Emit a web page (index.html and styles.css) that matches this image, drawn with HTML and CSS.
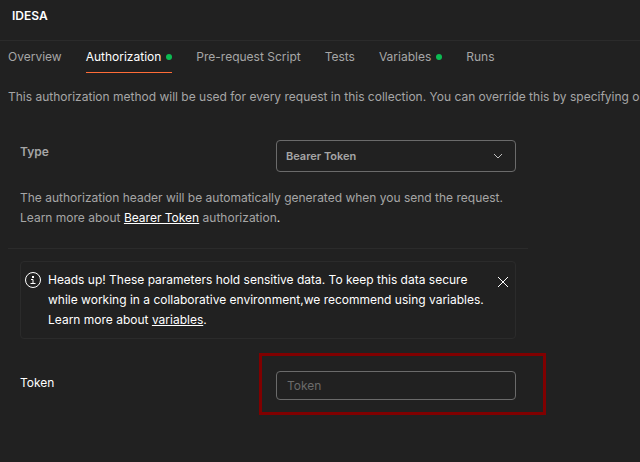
FILE: index.html
```html
<!DOCTYPE html>
<html lang="en">
<head>
<meta charset="utf-8">
<title>IDESA</title>
<link rel="stylesheet" href="styles.css">
</head>
<body>
<header class="header"><h1 class="title">IDESA</h1></header>
<nav class="tabs">
  <a class="tab" href="#overview">Overview</a>
  <a class="tab tab-active" href="#authorization">Authorization<span class="dot"></span></a>
  <a class="tab" href="#prerequest">Pre-request Script</a>
  <a class="tab" href="#tests">Tests</a>
  <a class="tab" href="#variables">Variables<span class="dot"></span></a>
  <a class="tab" href="#runs">Runs</a>
</nav>
<main class="content">
  <p class="intro">This authorization method will be used for every request in this collection. You can override this by specifying one</p>
  <section class="auth">
    <div class="row">
      <label class="label label-type" for="type">Type</label>
      <div class="select-wrap">
        <select class="control select" id="type"><option>Bearer Token</option></select>
        <svg class="chevron" viewBox="0 0 16 16" aria-hidden="true"><path d="M4 6l4 4 4-4"/></svg>
      </div>
    </div>
    <p class="help">The authorization header will be automatically generated when you send the request. Learn more about <a class="link" href="#bearer">Bearer Token</a> authorization<span class="stop">.</span></p>
  </section>
  <section class="params">
    <div class="alert" role="note">
      <svg class="info" viewBox="0 0 18 18" aria-hidden="true"><circle cx="9" cy="9" r="7.500"/><path d="M7 8.500h2v4M6.500 12.500h5"/><path class="solid" d="M8 5h2v2H8z"/></svg>
      <p class="alert-text">Heads up! These parameters hold sensitive data. To keep this data secure while working in a collaborative environment,we recommend using variables. Learn more about <a class="link" href="#vars">variables</a>.</p>
      <button class="close" type="button" aria-label="Close"><svg viewBox="0 0 16 16"><path d="m3 3 10 10M13 3 3 13"/></svg></button>
    </div>
    <div class="row">
      <label class="label" for="token">Token</label>
      <div class="highlight"><input class="control input" id="token" type="text" placeholder="Token"></div>
    </div>
  </section>
</main>
</body>
</html>
```
FILE: styles.css
```css
* {
  box-sizing: border-box;
}

body {
  margin: 0;
  min-height: 100vh;
  background: #212121;
  color: #a6a6a6;
  font: 12px/20px Inter, sans-serif;
}

h1,
p {
  margin: 0;
}

svg {
  fill: none;
  stroke: currentColor;
}

.header {
  padding: 6px 12px 14px;
  border-bottom: 1px solid #2b2b2b;
}

.title {
  color: #fff;
  font-size: 12px;
  font-weight: 600;
  line-height: 20px;
}

.tabs {
  display: flex;
  gap: 24px;
  padding: 0 8px;
}

.tab {
  display: flex;
  align-items: center;
  gap: 5px;
  height: 32px;
  border-bottom: 1px solid transparent;
  color: #a6a6a6;
  text-decoration: none;
  white-space: nowrap;
}

.tab-active {
  border-color: #ff6c37;
  color: #fff;
}

.dot {
  width: 6px;
  height: 6px;
  border-radius: 50%;
  background: #0cbb52;
}

.content {
  padding: 14px 0 14px 8px;
}

.intro {
  overflow: hidden;
  white-space: nowrap;
}

.auth {
  max-width: 520px;
  padding: 33px 12px 20px;
  border-bottom: 1px solid #2b2b2b;
}

.row {
  display: flex;
  align-items: flex-start;
  justify-content: space-between;
}

.label {
  color: #fff;
  padding-top: 2px;
}

.label-type {
  color: #a6a6a6;
  font-weight: 600;
}

.select-wrap {
  position: relative;
  width: 240px;
}

.control {
  display: block;
  width: 100%;
  margin: 0;
  border: 1px solid #6b6b6b;
  border-radius: 4px;
  background: transparent;
  font-family: inherit;
}

.select {
  appearance: none;
  height: 32px;
  padding: 0 9px;
  color: #a6a6a6;
  font-size: 11px;
  font-weight: 600;
}

.chevron {
  position: absolute;
  top: 8px;
  right: 10px;
  width: 16px;
  height: 16px;
  color: #c0c0c0;
  pointer-events: none;
}

.help {
  margin-top: 16px;
}

.link {
  color: #fff;
  text-underline-offset: 1px;
}

.stop {
  color: #fff;
}

.params {
  max-width: 520px;
  padding: 12px 12px 0;
}

.alert {
  display: flex;
  align-items: flex-start;
  padding: 8px 4px;
  border: 1px solid #2b2b2b;
  border-radius: 4px;
  color: #fff;
}

.info {
  flex: none;
  width: 18px;
  height: 18px;
  margin: 1px 6px 0 -1px;
}

.solid {
  fill: currentColor;
  stroke: none;
}

.alert-text {
  flex: 1;
}

.close {
  width: 16px;
  height: 16px;
  margin: 4px 0 0 8px;
  padding: 0;
  border: 0;
  background: none;
  color: #fff;
}

.close svg {
  display: block;
}

.highlight {
  flex: none;
  width: 287px;
  margin: 14px -30px 0 0;
  padding: 15px 27px 12px 14px;
  border: 3px solid #800000;
}

.params .label {
  padding-top: 34px;
}

.input {
  height: 29px;
  padding: 0 10px;
  color: #fff;
  font-size: 12px;
}

.input::placeholder {
  color: #6b6b6b;
}
```
